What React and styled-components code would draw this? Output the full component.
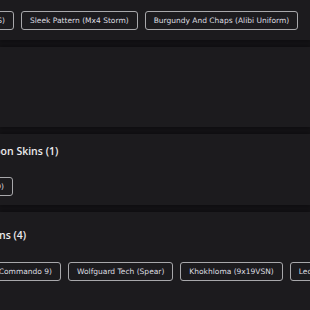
import React from "react";
import styled, { createGlobalStyle } from "styled-components";

const Global = createGlobalStyle`
  html, body { margin: 0; padding: 0; background: #141316; overflow: hidden; }
  body { font-family: "DejaVu Sans", "Liberation Sans", sans-serif; }
`;

const Page = styled.div`
  width: 310px;
  height: 310px;
  display: flex;
  flex-direction: column;
  gap: 7px;
  overflow: hidden;
`;

const Card = styled.section`
  background: #1c1b1e;
  box-shadow: 0 0 4px rgba(0, 0, 0, 0.55);
  padding: ${(p) => p.$pad || "0"};
  height: ${(p) => (p.$h ? `${p.$h}px` : "auto")};
  flex-shrink: 0;
  display: flex;
  flex-direction: column;
  gap: ${(p) => p.$gap || 0}px;
`;

const Heading = styled.h3`
  margin: 0 0 0 ${(p) => p.$offset}px;
  font-family: "Open Sans", "DejaVu Sans", sans-serif;
  font-size: 10.5px;
  line-height: 20px;
  font-weight: 600;
  color: #ececee;
  white-space: nowrap;
`;

const Row = styled.div`
  display: flex;
  gap: 7px;
  white-space: nowrap;
`;

const Lead = styled.div`
  width: ${(p) => p.$end}px;
  display: flex;
  justify-content: flex-end;
  flex-shrink: 0;
`;

const Chip = styled.span`
  flex-shrink: 0;
  box-sizing: border-box;
  height: 19px;
  padding: 0 8px;
  display: inline-flex;
  align-items: center;
  border: 1px solid #a8a8ab;
  border-radius: 3px;
  color: #dedee0;
  font-size: 7.5px;
`;

const ChipRow = ({ end, items }) => (
  <Row>
    <Lead $end={end}>
      <Chip>{items[0]}</Chip>
    </Lead>
    {items.slice(1).map((t) => (
      <Chip key={t}>{t}</Chip>
    ))}
  </Row>
);

export default function App() {
  return (
    <>
      <Global />
      <Page>
        <Card $pad="11px 0 10px">
          <ChipRow
            end={14}
            items={["Desert Fang (Kar98S)", "Sleek Pattern (Mx4 Storm)", "Burgundy And Chaps (Alibi Uniform)"]}
          />
        </Card>
        <Card $h={80} />
        <Card $pad="7px 0 9px" $gap={16}>
          <Heading $offset={-28}>Weapon Skins (1)</Heading>
          <ChipRow end={13} items={["Tiger Camo (Kilo 9)"]} />
        </Card>
        <Card $pad="13px 0 30px" $gap={17}>
          <Heading $offset={-36}>Weapons (4)</Heading>
          <ChipRow
            end={61}
            items={["Urban Stripes (Commando 9)", "Wolfguard Tech (Spear)", "Khokhloma (9x19VSN)", "Leda Pattern (Kilo)"]}
          />
        </Card>
      </Page>
    </>
  );
}
